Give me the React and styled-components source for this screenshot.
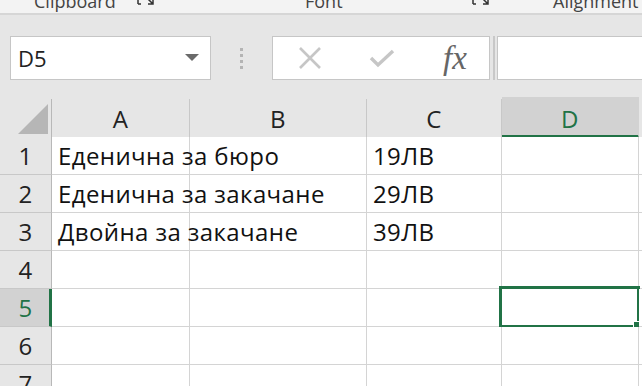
import styled, { createGlobalStyle } from "styled-components";

const Global = createGlobalStyle`
  body{
    margin: 0;
    background: #e6e6e6;
    overflow: hidden;
    font-family: "Open Sans", "Noto Sans", sans-serif;
  }
`;

const Ribbon = styled.div`
  height: 13px;
  background: #f3f3f3;
  border-bottom: 2px solid #d6d6d6;
  overflow: hidden;
  display: flex;
  align-items: flex-start;
  font-size: 18px;
  line-height: 20px;
  color: #444;
`;

const Group = styled.div`
  width: ${(p) => p.w}px;
  display: flex;
  margin-top: -9px;
  position: relative;
  span{
    margin-left: ${(p) => p.pad}px;
  }
`;

const Launcher = styled.svg`
  position: absolute;
  right: ${(p) => p.r}px;
  top: 8px;
`;

const Toolbar = styled.div`
  display: flex;
  align-items: center;
  padding: 21px 0 19px 10px;
  height: 44px;
`;

const NameBox = styled.div`
  background: #fff;
  border: 1px solid #c6c6c6;
  display: flex;
  align-items: center;
  justify-content: space-between;
  padding: 0 11px 0 7px;
  box-sizing: border-box;
  width: 201px;
  height: 44px;
  font-size: 22px;
  color: #222;
`;

const Dots = styled.div`
  width: 61px;
  display: flex;
  flex-direction: column;
  align-items: center;
  gap: 3px;
  i{
    width: 3px;
    height: 3px;
    background: #b4b4b4;
  }
`;

const FuncBox = styled.div`
  width: 218px;
  height: 44px;
  box-sizing: border-box;
  background: #fff;
  border: 1px solid #c6c6c6;
  display: flex;
  align-items: center;
  padding-left: 23px;
`;

const FuncBtn = styled.div`
  width: ${(p) => p.w}px;
  display: flex;
  justify-content: center;
`;

const Fx = styled.span`
  font-family: "Liberation Serif", "DejaVu Serif", serif;
  font-style: italic;
  font-size: 33px;
  line-height: 32px;
  color: #666;
`;

const Splitter = styled.div`
  width: 7px;
  height: 44px;
  display: flex;
  justify-content: center;
  i{
    width: 2px;
    height: 100%;
    background: #c8c8c8;
  }
`;

const Formula = styled.div`
  flex: 1;
  height: 44px;
  box-sizing: border-box;
  background: #fff;
  border: 1px solid #c6c6c6;
  border-right: none;
`;

const Grid = styled.div`
  display: grid;
  grid-template-columns: 52px 138px 177px 135px 137px 1fr;
  grid-auto-rows: 38px;
  font-size: 24px;
  letter-spacing: 0.4px;
  color: #111;
`;

const Corner = styled.div`
  height: 39px;
  border-right: 1px solid #b8b8b8;
  border-bottom: 1px solid #9e9e9e;
  box-sizing: border-box;
  display: flex;
  align-items: flex-end;
  justify-content: flex-end;
  padding: 0 3px 3px 0;
  svg{ display: block; }
`;

const ColHead = styled.div`
  box-sizing: border-box;
  display: flex;
  align-items: center;
  justify-content: center;
  border-right: 1px solid ${(p) => (p.active ? "#d2d2d2" : "#c8c8c8")};
  border-bottom: ${(p) => (p.active ? "3px solid #217346" : "1px solid #9e9e9e")};
  background: ${(p) => (p.active ? "#d2d2d2" : "transparent")};
  color: ${(p) => (p.active ? "#217346" : "#222")};
  margin-top: ${(p) => (p.active ? "-2px" : "0")};
  height: ${(p) => (p.active ? "41px" : "39px")};
  padding-top: ${(p) => (p.active ? "4px" : "0")};
`;

const RowHead = styled.div`
  box-sizing: border-box;
  display: flex;
  align-items: center;
  justify-content: center;
  background: ${(p) => (p.active ? "#d2d2d2" : "#e6e6e6")};
  color: ${(p) => (p.active ? "#217346" : "#222")};
  border-bottom: 1px solid #c8c8c8;
  border-right: ${(p) => (p.active ? "3px solid #217346" : "1px solid #b8b8b8")};
  padding-left: ${(p) => (p.active ? "2px" : "0")};
`;

const Cell = styled.div`
  position: relative;
  box-sizing: border-box;
  background: #fff;
  border-right: 1px solid #d4d4d4;
  border-bottom: 1px solid #d4d4d4;
  padding-left: 6px;
  display: flex;
  align-items: center;
  white-space: nowrap;
  z-index: ${(p) => (p.overflow ? 1 : 0)};
  span{ position: relative; }
`;

const Selection = styled.div`
  position: absolute;
  left: -3px;
  top: -3px;
  right: -2px;
  bottom: -2px;
  border: 3px solid #217346;
  z-index: 2;
  &::after{
    content: "";
    position: absolute;
    right: -5px;
    bottom: -5px;
    width: 7px;
    height: 7px;
    background: #217346;
    border: 1px solid #fff;
  }
`;

const rows = [
  ["Еденична за бюро", "", "19ЛВ"],
  ["Еденична за закачане", "", "29ЛВ"],
  ["Двойна за закачане", "", "39ЛВ"],
  ["", "", ""],
  ["", "", ""],
  ["", "", ""],
  ["", "", ""],
];

const LaunchIcon = ({ r }) => (
  <Launcher r={r} width="18" height="10" viewBox="0 0 18 10">
    <path d="M1 0 V5 M1 5 H4" stroke="#333" strokeWidth="1.5" fill="none" />
    <path d="M11 0 L16 5 M16 0 V5 H11" stroke="#333" strokeWidth="1.5" fill="none" />
  </Launcher>
);

export default function App() {
  return (
    <>
      <Global />
      <Ribbon>
        <Group w={205} pad={34}>
          <span>Clipboard</span>
          <LaunchIcon r={50} />
        </Group>
        <Group w={280} pad={100}>
          <span>Font</span>
          <LaunchIcon r={-5} />
        </Group>
        <Group w={157} pad={68}>
          <span>Alignment</span>
        </Group>
      </Ribbon>
      <Toolbar>
        <NameBox>
          <span>D5</span>
          <svg width="14" height="8" viewBox="0 0 14 8">
            <path d="M0 0 H14 L7 7 Z" fill="#6a6a6a" />
          </svg>
        </NameBox>
        <Dots>
          <i />
          <i />
          <i />
          <i />
        </Dots>
        <FuncBox>
          <FuncBtn w={28}>
            <svg width="24" height="24" viewBox="0 0 24 24">
              <path d="M2 2 L22 22 M22 2 L2 22" stroke="#c6c6c6" strokeWidth="2.6" />
            </svg>
          </FuncBtn>
          <FuncBtn w={116}>
            <svg width="26" height="20" viewBox="0 0 26 20">
              <path d="M2 10 L9 17 L24 3" stroke="#c6c6c6" strokeWidth="3.4" fill="none" />
            </svg>
          </FuncBtn>
          <FuncBtn w={30}>
            <Fx>fx</Fx>
          </FuncBtn>
        </FuncBox>
        <Splitter>
          <i />
        </Splitter>
        <Formula />
      </Toolbar>
      <Grid>
        <Corner>
          <svg width="30" height="30" viewBox="0 0 30 30">
            <path d="M30 0 V30 H0 Z" fill="#b6b6b6" />
          </svg>
        </Corner>
        {["A", "B", "C", "D"].map((c) => (
          <ColHead key={c} active={c === "D"}>
            {c}
          </ColHead>
        ))}
        <ColHead />
        {rows.map((r, i) => (
          <Row key={i} n={i + 1} data={r} />
        ))}
      </Grid>
    </>
  );
}

function Row({ n, data }) {
  const active = n === 5;
  return (
    <>
      <RowHead active={active}>{n}</RowHead>
      <Cell overflow={!!data[0]}>
        <span>{data[0]}</span>
      </Cell>
      <Cell>{data[1]}</Cell>
      <Cell>{data[2]}</Cell>
      <Cell>{active && <Selection />}</Cell>
      <Cell />
    </>
  );
}
